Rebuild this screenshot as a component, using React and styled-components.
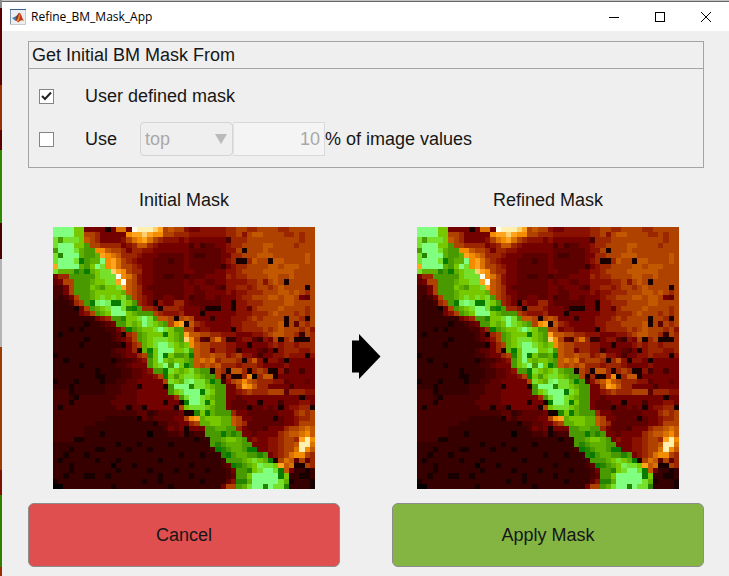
import React from "react";
import styled, { createGlobalStyle } from "styled-components";

const GlobalStyle = createGlobalStyle`
  * { box-sizing: border-box; }
  body {
    margin: 0;
    background: #efefef;
    color: #161616;
    font-family: "Liberation Sans", Arial, sans-serif;
    font-size: 18px;
    line-height: 22px;
  }
`;

const Desktop = styled.div`
  display: grid;
  grid-template-columns: 2px minmax(0, 1fr);
  min-height: 100vh;
`;

const DesktopEdge = styled.div`
  background: linear-gradient(
    #8a8a8a 0 8px,
    #5a0000 8px 85px,
    #9a3000 85px 130px,
    #5a0000 130px 150px,
    #2f8a00 150px 223px,
    #4a0000 223px 259px,
    #b4b4b8 259px 347px,
    #a03a00 347px 470px,
    #7a1000 470px 495px,
    #2f8000 495px 567px,
    #9a2c00 567px
  );
`;

const Window = styled.div`
  display: flex;
  flex-direction: column;
  background: #efefef;
  border-top: 1px solid #c4c4c4;
`;

const TitleBar = styled.header`
  display: flex;
  align-items: center;
  height: 30px;
  padding-left: 8px;
  gap: 5px;
  background: #fff;
  border-top: 1px solid #666;
`;

const Title = styled.h1`
  flex: 1;
  margin: 0;
  color: #000;
  font: 400 12px/16px "Open Sans", sans-serif;
`;

const WindowControls = styled.div`
  display: flex;
`;

const WindowButton = styled.button`
  display: grid;
  place-items: center;
  width: 46px;
  height: 28px;
  padding: 0;
  border: 0;
  background: transparent;
`;

const Content = styled.main`
  display: flex;
  flex-direction: column;
  padding: 10px 25px 9px 26px;
`;

const Panel = styled.section`
  border: 1px solid #a4a4a4;
  padding-bottom: 11px;
`;

const PanelTitle = styled.h2`
  margin: 0;
  padding: 2px 3px;
  border-bottom: 1px solid #a4a4a4;
  font-size: 18px;
  font-weight: 400;
  line-height: 22px;
`;

const OptionRow = styled.div`
  display: grid;
  grid-template-columns: 46px auto auto 1fr;
  align-items: center;
  justify-content: start;
  height: ${(p) => (p.$tall ? "34px" : "32px")};
  margin-top: ${(p) => (p.$tall ? "10px" : "11px")};
  padding-left: 10px;
`;

const CheckCell = styled.span`
  display: grid;
  width: 15px;
  height: 15px;
  > * { grid-area: 1 / 1; }
  svg { pointer-events: none; }
`;

const Checkbox = styled.input`
  appearance: none;
  width: 15px;
  height: 15px;
  margin: 0;
  border: 1px solid #858585;
  background: #fff;
`;

const UseLabel = styled.label`
  width: 55px;
`;

const Fields = styled.span`
  display: flex;
`;

const SelectCell = styled.span`
  display: grid;
  align-items: center;
  width: 93px;
  > * { grid-area: 1 / 1; }
  svg { justify-self: end; margin-right: 6px; pointer-events: none; }
`;

const Select = styled.select`
  appearance: none;
  width: 93px;
  height: 34px;
  padding: 0 4px;
  border: 1px solid #d4d4d4;
  border-radius: 4px;
  background: #efefef;
  color: #a9a9a9;
  opacity: 1;
  font: inherit;
`;

const NumberInput = styled.input`
  width: 92px;
  height: 34px;
  padding: 0 4px;
  border: 1px solid #d9d9d9;
  border-left-color: #e2e2e2;
  background: #f4f4f4;
  color: #a9a9a9;
  font: inherit;
  text-align: right;
`;

const Comparison = styled.div`
  display: grid;
  grid-template-columns: minmax(0, 1fr) 52px minmax(0, 1fr);
  align-items: start;
  margin-top: 21px;
`;

const Figure = styled.figure`
  margin: 0;
  padding: 0 25px;
`;

const Caption = styled.figcaption`
  margin-bottom: 16px;
  text-align: center;
`;

const MapSvg = styled.svg`
  display: block;
  width: 100%;
  height: auto;
`;

const ArrowCell = styled.div`
  align-self: center;
  display: flex;
  justify-content: center;
  padding-top: 35px;
`;

const Actions = styled.div`
  display: grid;
  grid-template-columns: 1fr 1fr;
  gap: 52px;
  margin-top: 14px;
`;

const ActionButton = styled.button`
  height: 64px;
  border: 1px solid #8c8c8c;
  border-radius: 6px;
  background: ${(p) => p.$color};
  color: #161616;
  font: inherit;
`;

const palette = {
  0: "#050000", 1: "#180000", 2: "#360000", 3: "#460000",
  4: "#5c0000", 5: "#720100", 6: "#8a1000", 7: "#9c2600",
  8: "#b04200", 9: "#c45800", a: "#da7200", b: "#f48c00",
  c: "#ffa41c", d: "#ffd070", e: "#fff0b0", f: "#fffff0",
  g: "#087c00", h: "#248400", i: "#489a00", j: "#60b000",
  k: "#78c800", l: "#76e02a", m: "#78f058", n: "#80ff80",
};

// Each entry is one row of the 50 x 50 map: left 25 cells, then right 25.
const rows = [
  ["nnnnkk555515aa5feeedc8988", "6556666677887788887788888"],
  ["nnnnkk88755555bccdcbb8877", "7666666677868998888778788"],
  ["lilllk987555568abca876665", "6555555537778888888888788"],
  ["lnnnkki887777567997655555", "5353445567788889988887888"],
  ["innnljiibb988757766555555", "5444444566818889888888888"],
  ["lhnnnjiijcba9777655544444", "5433444557788899988888898"],
  ["lnnnlgijjnbca876555444344", "5444444567117988199888898"],
  ["cnnnnjiknlbca887655444444", "5444444256778888998999888"],
  ["ljjjhigjklldcb87755444444", "5544445566788889999998888"],
  ["577iiiiiklllfba8655443344", "3444555576778888998898888"],
  ["4588iiijkkllcf98655444444", "5455445566667786898188888"],
  ["3358iiikjikklc98754444444", "5545554366776788789888818"],
  ["3358iiijkkkkkj98755444444", "5544555565667778889989878"],
  ["32358iijklklkli8765445544", "5344554555677888998998548"],
  ["222378igmnmgglki765165577", "5444444551667778888998888"],
  ["2222158ijklnnlhgi77617776", "5554111551664788889888878"],
  ["22222568ijknnnkjiii876667", "5551555555666777898887878"],
  ["22222222567iihkklnli99818", "9855525556667878888188718"],
  ["222222122345iikjknlkji8bc", "1976555556677788889184878"],
  ["22212122223357gijkklnlkii", "8856655551677778789888786"],
  ["2122222222234178ijkkkgkji", "c998877666555667899887287"],
  ["2222221222234568ijklllkji", "db8438a722566426581781117"],
  ["22222122222221578jklnnlkj", "kb98877766551555676776777"],
  ["22222222222344571jgknnnkk", "li98857766255543516777667"],
  ["122222222223345578hkngkii", "jg98898867866535566766616"],
  ["221222222221233456iknkjkk", "ji9a9a7888717961665155555"],
  ["222221222222334555iklnink", "gi98989777677765555655555"],
  ["2222222212222334456iiglkj", "kljii18719971787116355355"],
  ["222222221122233445568gkik", "llkjii817117b079915555555"],
  ["1222122221223344555558lkj", "mnlljgi3689b9877766455545"],
  ["2221222222333444155551inn", "nhllkjii558cb977555535555"],
  ["3331222222333444555555ikl", "nnnglkii55678777888477766"],
  ["333213333333444455555557i", "lnnlkjii55455555555555155"],
  ["3331333333344444555551551", "gnnlgkii54445515553555665"],
  ["3133333333334414415555518", "klllkjii54441445451566771"],
  ["3333333333333333442344445", "11hkgjiii7554444445557878"],
  ["3333333333222222143444455", "8bcjkkkjj9855444414556778"],
  ["3333333322222222222133445", "578jjkkjj9874444444556888"],
  ["3333332222222222222223545", "1555iijjii7544435557889a9"],
  ["3333332221222222220222334", "1233iiigihi55455557899ab9"],
  ["3333112222222222222222222", "22122iijkkji5655667887ceb"],
  ["2222222222221222122222122", "22222ihijjjii555667889eea"],
  ["2221222211222212221222222", "222223ghijjigg5566788aeb9"],
  ["2212221222222222222222221", "2221222hgijjiihi5678abb87"],
  ["2122222212221222222212222", "22222223iiijklkjg18a94847"],
  ["2221222222202221222222222", "212222234ghijkmllkc9a1187"],
  ["2221222222221222221222212", "2222122235iihklnnlg952212"],
  ["2212221122122222222212222", "2122222234iiknnnnngk22112"],
  ["1222222222222222212212222", "2221222246hhjnnnnnlj12221"],
  ["0022222222212222222222122", "2222222588ijlnnhnllh22221"],
].map((halves) => halves.join(""));

// Neighbouring cells of one colour are drawn as a single run.
const runs = rows.flatMap((row, y) => {
  const found = [];
  let start = 0;
  for (let x = 1; x <= row.length; x += 1) {
    if (row[x] !== row[start]) {
      found.push({ x: start, y, width: x - start, fill: palette[row[start]] });
      start = x;
    }
  }
  return found;
});

function MaskMap({ title }) {
  return (
    <Figure>
      <Caption>{title}</Caption>
      <MapSvg viewBox="0 0 50 50" shapeRendering="crispEdges" role="img" aria-label={title}>
        {runs.map((r) => (
          <rect key={`${r.x}-${r.y}`} x={r.x} y={r.y} width={r.width} height="1" fill={r.fill} />
        ))}
      </MapSvg>
    </Figure>
  );
}

function MatlabIcon() {
  return (
    <svg width="16" height="16" viewBox="0 0 16 16" aria-hidden="true">
      <rect x="0.5" y="0.5" width="15" height="15" fill="#eceef0" stroke="#c8ccd2" />
      <path d="M0 0.5H16" stroke="#38618c" />
      <path d="M0.5 1V15" stroke="#8095aa" />
      <path d="M2 9L5.5 7.5L8 10L5.5 12Z" fill="#3d83b8" />
      <path d="M5.5 7.5C7.3 7 8 4 9.5 3.8L8 10L6 11.8Z" fill="#744044" />
      <path d="M9.5 3.8C11 4 12 9 14 12C12 10.8 10.5 11 8.5 13.5L6 11.5C8 10 8 5 9.5 3.8Z" fill="#c63a14" />
      <path d="M9.5 4C9.8 7 10 9 8.2 12.5L7 11.3C9 9 8.5 6 9.5 4Z" fill="#f2a136" />
    </svg>
  );
}

function CheckOption({ id, checked }) {
  return (
    <CheckCell>
      <Checkbox id={id} type="checkbox" defaultChecked={checked} />
      {checked && (
        <svg width="15" height="15" viewBox="0 0 15 15" aria-hidden="true">
          <path d="M3 7L6 10L12 3.5" fill="none" stroke="#222" strokeWidth="2" />
        </svg>
      )}
    </CheckCell>
  );
}

export default function App() {
  return (
    <Desktop>
      <GlobalStyle />
      <DesktopEdge />
      <Window>
        <TitleBar>
          <MatlabIcon />
          <Title>Refine_BM_Mask_App</Title>
          <WindowControls>
            <WindowButton aria-label="Minimize">
              <svg width="10" height="10" viewBox="0 0 10 10"><path d="M0 5.5H10" stroke="#000" /></svg>
            </WindowButton>
            <WindowButton aria-label="Maximize">
              <svg width="10" height="10" viewBox="0 0 10 10"><rect x="0.5" y="0.5" width="9" height="9" fill="none" stroke="#000" /></svg>
            </WindowButton>
            <WindowButton aria-label="Close">
              <svg width="10" height="10" viewBox="0 0 10 10"><path d="M0 0L10 10M10 0L0 10" stroke="#000" /></svg>
            </WindowButton>
          </WindowControls>
        </TitleBar>
        <Content>
          <Panel>
            <PanelTitle>Get Initial BM Mask From</PanelTitle>
            <OptionRow>
              <CheckOption id="user-mask" checked />
              <label htmlFor="user-mask">User defined mask</label>
            </OptionRow>
            <OptionRow $tall>
              <CheckOption id="use-values" />
              <UseLabel htmlFor="use-values">Use</UseLabel>
              <Fields>
                <SelectCell>
                  <Select aria-label="Which values" disabled defaultValue="top">
                    <option value="top">top</option>
                    <option value="bottom">bottom</option>
                  </Select>
                  <svg width="12" height="10" viewBox="0 0 12 10" aria-hidden="true">
                    <path d="M0 0H12L6 10Z" fill="#bababa" />
                  </svg>
                </SelectCell>
                <NumberInput id="percent" type="text" disabled defaultValue="10" />
              </Fields>
              <label htmlFor="percent">% of image values</label>
            </OptionRow>
          </Panel>
          <Comparison>
            <MaskMap title="Initial Mask" />
            <ArrowCell>
              <svg width="30" height="47" viewBox="0 0 30 47" aria-hidden="true">
                <path d="M1 7.5H8V1L29.5 23.5L8 46V39.5H1Z" fill="#000" />
              </svg>
            </ArrowCell>
            <MaskMap title="Refined Mask" />
          </Comparison>
          <Actions>
            <ActionButton $color="#df4f50">Cancel</ActionButton>
            <ActionButton $color="#84b543">Apply Mask</ActionButton>
          </Actions>
        </Content>
      </Window>
    </Desktop>
  );
}
